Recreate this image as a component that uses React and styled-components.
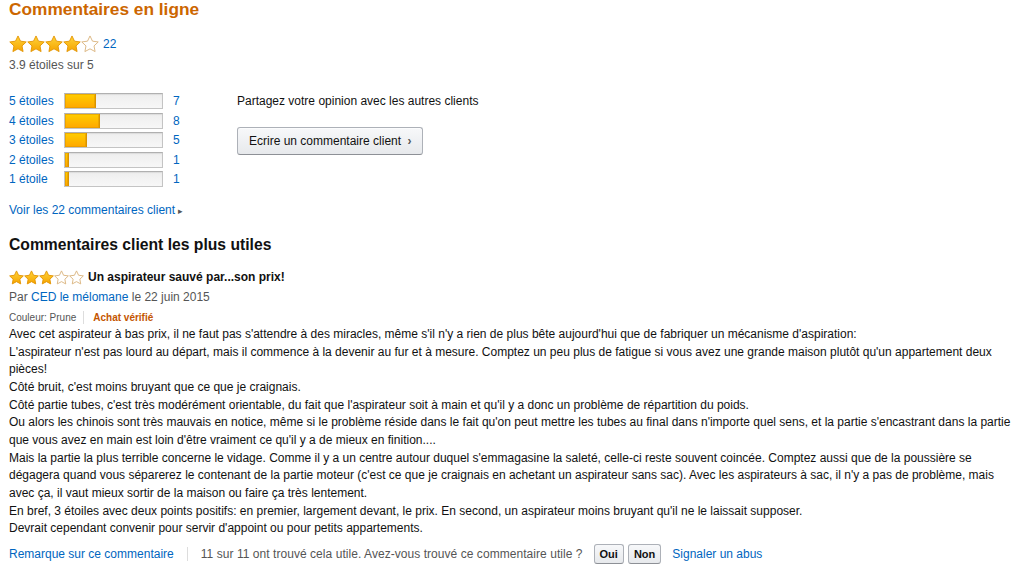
import React from "react";
import styled, { createGlobalStyle } from "styled-components";

const GlobalStyle = createGlobalStyle`
  body {
    margin: 0;
    background: #fff;
    font-family: "Liberation Sans", Arial, sans-serif;
    color: #111;
  }
`;

const starPoints = (size) => {
  const c = size / 2;
  const R = size * 0.48;
  const r = R * 0.49;
  const pts = [];
  for (let i = 0; i < 10; i++) {
    const rad = i % 2 === 0 ? R : r;
    const a = (Math.PI / 5) * i - Math.PI / 2;
    pts.push(`${(c + rad * Math.cos(a)).toFixed(2)},${(c + 0.6 + rad * Math.sin(a)).toFixed(2)}`);
  }
  return pts.join(" ");
};

const Star = ({ size, filled }) => (
  <svg width={size} height={size} viewBox={`0 0 ${size} ${size}`}>
    <defs>
      <linearGradient id="gold" x1="0" y1="0" x2="0" y2="1">
        <stop offset="0" stopColor="#ffd43a" />
        <stop offset="1" stopColor="#f5a300" />
      </linearGradient>
    </defs>
    <polygon
      points={starPoints(size)}
      fill={filled ? "url(#gold)" : "#fff"}
      stroke={filled ? "#e39400" : "#d9b27a"}
      strokeWidth="0.9"
      strokeLinejoin="round"
    />
  </svg>
);

const Stars = ({ value, size }) => (
  <StarGroup>
    {[1, 2, 3, 4, 5].map((n) => (
      <Star key={n} size={size} filled={n <= value} />
    ))}
  </StarGroup>
);

const histogram = [
  { label: "5 étoiles", count: 7 },
  { label: "4 étoiles", count: 8 },
  { label: "3 étoiles", count: 5 },
  { label: "2 étoiles", count: 1 },
  { label: "1 étoile", count: 1 },
];

const paragraphs = [
  "Avec cet aspirateur à bas prix, il ne faut pas s'attendre à des miracles, même s'il n'y a rien de plus bête aujourd'hui que de fabriquer un mécanisme d'aspiration:",
  "L'aspirateur n'est pas lourd au départ, mais il commence à la devenir au fur et à mesure. Comptez un peu plus de fatigue si vous avez une grande maison plutôt qu'un appartement deux pièces!",
  "Côté bruit, c'est moins bruyant que ce que je craignais.",
  "Côté partie tubes, c'est très modérément orientable, du fait que l'aspirateur soit à main et qu'il y a donc un problème de répartition du poids.",
  "Ou alors les chinois sont très mauvais en notice, même si le problème réside dans le fait qu'on peut mettre les tubes au final dans n'importe quel sens, et la partie s'encastrant dans la partie que vous avez en main est loin d'être vraiment ce qu'il y a de mieux en finition....",
  "Mais la partie la plus terrible concerne le vidage. Comme il y a un centre autour duquel s'emmagasine la saleté, celle-ci reste souvent coincée. Comptez aussi que de la poussière se dégagera quand vous séparerez le contenant de la partie moteur (c'est ce que je craignais en achetant un aspirateur sans sac). Avec les aspirateurs à sac, il n'y a pas de problème, mais avec ça, il vaut mieux sortir de la maison ou faire ça très lentement.",
  "En bref, 3 étoiles avec deux points positifs: en premier, largement devant, le prix. En second, un aspirateur moins bruyant qu'il ne le laissait supposer.",
  "Devrait cependant convenir pour servir d'appoint ou pour petits appartements.",
];

const App = () => {
  const total = 22;
  return (
    <Page>
      <GlobalStyle />
      <Title>Commentaires en ligne</Title>
      <StarRow>
        <Stars value={4} size={18} />
        <Link>22</Link>
      </StarRow>
      <Average>3.9 étoiles sur 5</Average>

      <Overview>
        <Histogram>
          {histogram.map((row) => (
            <HistRow key={row.label}>
              <Link>{row.label}</Link>
              <Bar>
                <Fill style={{ width: `${(row.count / total) * 100}%` }} />
              </Bar>
              <Count>{row.count}</Count>
            </HistRow>
          ))}
        </Histogram>
        <Share>
          <ShareText>Partagez votre opinion avec les autres clients</ShareText>
          <WriteButton>
            Ecrire un commentaire client <Chevron>›</Chevron>
          </WriteButton>
        </Share>
      </Overview>

      <SeeAll>
        Voir les 22 commentaires client <Caret>▸</Caret>
      </SeeAll>

      <SectionTitle>Commentaires client les plus utiles</SectionTitle>

      <Review>
        <ReviewHead>
          <Stars value={3} size={15} />
          <ReviewTitle>Un aspirateur sauvé par...son prix!</ReviewTitle>
        </ReviewHead>
        <Byline>
          Par <Link>CED le mélomane</Link> le 22 juin 2015
        </Byline>
        <Meta>
          <span>Couleur: Prune</span>
          <Divider />
          <Verified>Achat vérifié</Verified>
        </Meta>
        <Body>
          {paragraphs.map((p, i) => (
            <p key={i}>{p}</p>
          ))}
        </Body>
        <Footer>
          <Link>Remarque sur ce commentaire</Link>
          <FooterDivider />
          <Helpful>11 sur 11 ont trouvé cela utile. Avez-vous trouvé ce commentaire utile ?</Helpful>
          <VoteButton>Oui</VoteButton>
          <VoteButton>Non</VoteButton>
          <AbuseLink>Signaler un abus</AbuseLink>
        </Footer>
      </Review>
    </Page>
  );
};

const Page = styled.div`
  padding: 0 3px 0 9px;
  font-size: 12px;
`;

const Title = styled.h2`
  margin: 0;
  font-size: 17.3px;
  line-height: 18px;
  font-weight: bold;
  color: #cc6600;
`;

const Link = styled.a`
  color: #0066c0;
  cursor: pointer;
`;

const StarGroup = styled.span`
  display: inline-flex;
  svg {
    display: block;
  }
`;

const StarRow = styled.div`
  display: flex;
  align-items: center;
  gap: 4px;
  margin-top: 17px;
  height: 18px;
  font-size: 12px;
`;

const Average = styled.div`
  margin-top: 4px;
  line-height: 17px;
  color: #555;
`;

const Overview = styled.div`
  display: flex;
  margin-top: 17.5px;
`;

const Histogram = styled.div`
  width: 228px;
`;

const HistRow = styled.div`
  display: grid;
  grid-template-columns: 55px 99px auto;
  align-items: center;
  height: 19.5px;
`;

const Count = styled(Link)`
  margin-left: 10px;
`;

const Bar = styled.div`
  height: 16px;
  box-sizing: border-box;
  border: 1px solid #c4c4c4;
  border-top-color: #b0b0b0;
  background: linear-gradient(#eeeeee, #f7f7f7);
  box-shadow: inset 0 1px 1px rgba(0, 0, 0, 0.08);
  overflow: hidden;
`;

const Fill = styled.div`
  height: 100%;
  box-sizing: border-box;
  background: linear-gradient(#ffce00, #ffa700);
  border-right: 1px solid #d89300;
  box-shadow: inset 0 0 0 1px rgba(220, 150, 0, 0.55);
`;

const Share = styled.div`
  display: flex;
  flex-direction: column;
  align-items: flex-start;
`;

const ShareText = styled.div`
  line-height: 19.5px;
  color: #111;
`;

const WriteButton = styled.button`
  margin-top: 16px;
  height: 28px;
  width: 186px;
  padding: 0 0 0 11px;
  text-align: left;
  font-family: inherit;
  font-size: 12px;
  color: #111;
  background: linear-gradient(#f7f8fa, #e7e9ec);
  border: 1px solid #adb1b8;
  border-bottom-color: #8d9096;
  border-radius: 3px;
  box-shadow: inset 0 1px 0 rgba(255, 255, 255, 0.6);
`;

const Chevron = styled.span`
  margin-left: 3px;
  font-size: 12px;
  font-weight: bold;
  color: #555;
`;

const SeeAll = styled(Link)`
  display: block;
  margin-top: 12.5px;
  line-height: 17px;
`;

const Caret = styled.span`
  font-size: 9px;
  color: #555;
`;

const SectionTitle = styled.h3`
  margin: 15.5px 0 0;
  font-size: 15.7px;
  line-height: 20px;
  font-weight: bold;
  color: #111;
`;

const Review = styled.div`
  margin-top: 13px;
`;

const ReviewHead = styled.div`
  display: flex;
  align-items: center;
  gap: 4px;
  height: 18px;
`;

const ReviewTitle = styled.span`
  font-weight: bold;
  color: #111;
`;

const Byline = styled.div`
  margin-top: 2.5px;
  line-height: 17px;
  color: #555;
`;

const Meta = styled.div`
  display: flex;
  align-items: center;
  margin-top: 4.5px;
  height: 14px;
  font-size: 10px;
  color: #555;
`;

const Divider = styled.span`
  width: 1px;
  height: 13px;
  margin: 0 9px 0 7px;
  background: #ddd;
`;

const Verified = styled.span`
  font-weight: bold;
  color: #c45500;
`;

const Body = styled.div`
  margin-top: 2px;
  line-height: 17.65px;
  color: #111;
  p {
    margin: 0;
  }
`;

const Footer = styled.div`
  display: flex;
  align-items: center;
  height: 20px;
  margin-top: 6px;
`;

const FooterDivider = styled.span`
  width: 1px;
  height: 14px;
  margin: 0 13px 0 13px;
  background: #ddd;
`;

const Helpful = styled.span`
  color: #555;
  letter-spacing: 0.05px;
`;

const VoteButton = styled.button`
  height: 20px;
  padding: 0 5px;
  margin-left: 4px;
  font-family: inherit;
  font-size: 11px;
  font-weight: bold;
  color: #111;
  background: linear-gradient(#f7f8fa, #e7e9ec);
  border: 1px solid #adb1b8;
  border-bottom-color: #8d9096;
  border-radius: 3px;
  &:first-of-type {
    margin-left: 11px;
  }
`;

const AbuseLink = styled(Link)`
  margin-left: 11px;
`;

export default App;
